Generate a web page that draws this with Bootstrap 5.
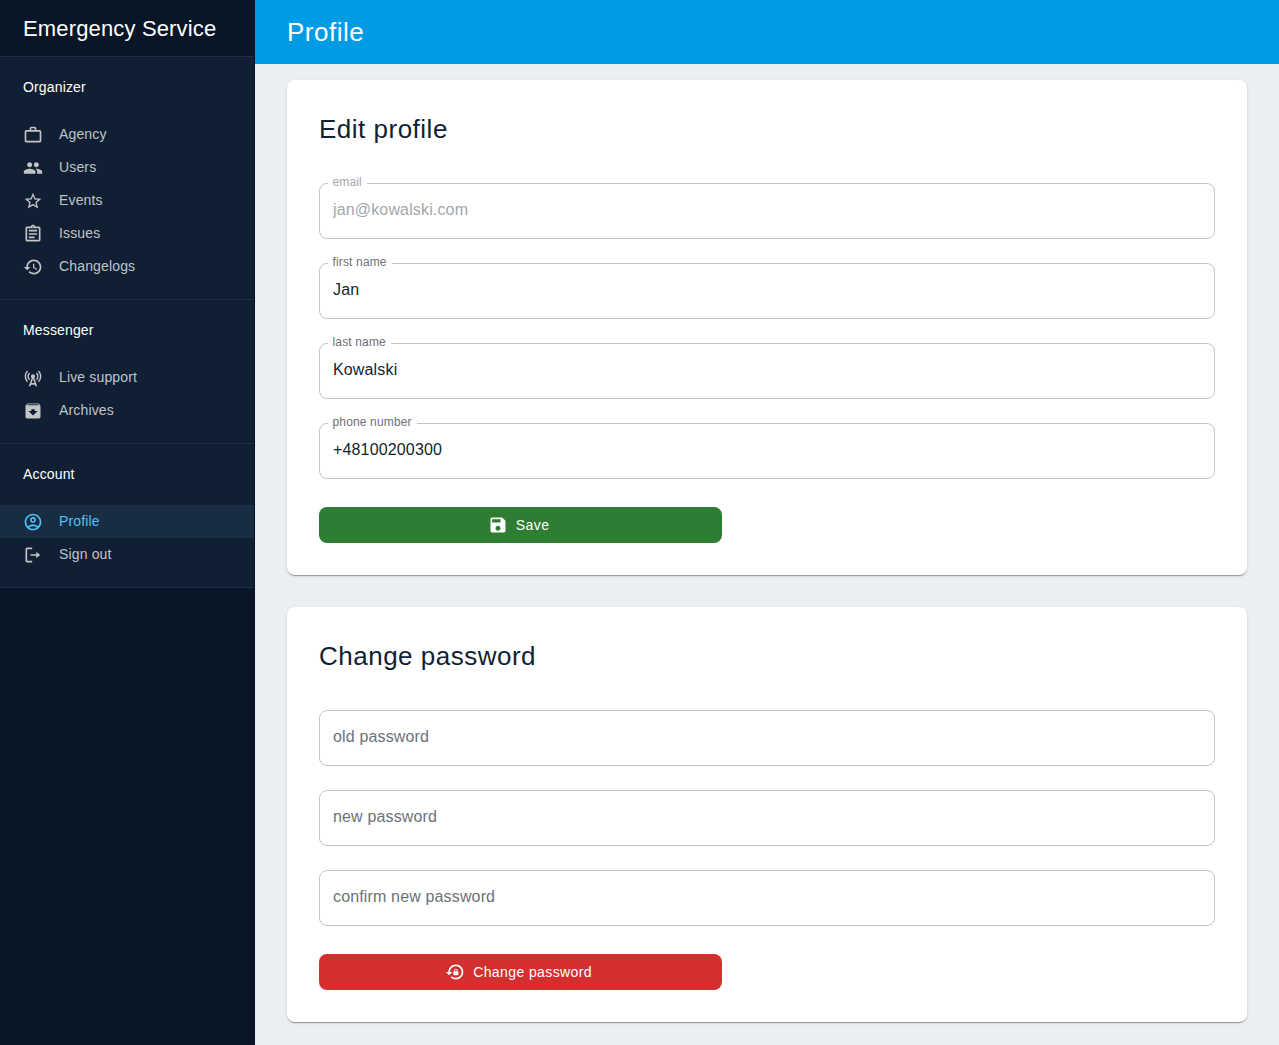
<!DOCTYPE html>
<html lang="en">
<head>
<meta charset="utf-8">
<meta name="viewport" content="width=device-width, initial-scale=1">
<title>Profile</title>
<link href="https://cdn.jsdelivr.net/npm/bootstrap@5.3.0/dist/css/bootstrap.min.css" rel="stylesheet">
<style>
body{font-family:"Liberation Sans",Arial,sans-serif;font-size:14px;letter-spacing:.15px;background:#eaeff1;color:#081627}
.side-bar{width:255px;background:#081627;border-right:1px solid #051020;color:#fff}
.brand{height:57px;padding:0 23px;font-size:22px;line-height:57px;border-bottom:1px solid #1c3144}
.menu-group{background:#101f33;border-bottom:1px solid #1c3144;padding-bottom:16px}
.menu-title{height:61px;line-height:20px;padding:20px 23px 0;font-size:14px;margin:0;font-weight:400}
.menu-group .nav-link{height:33px;padding:0 23px;gap:16px;color:#c2c4c6;line-height:20px}
.menu-group .nav-link.active{color:#4fc3f7;background:#182d42}
.menu-group .nav-link span{margin-top:-1px}
svg{width:20px;height:20px;fill:currentColor;flex:none}
.top-bar{height:64px;background:#009be5;color:#fff}
.page-title{font-size:26px;letter-spacing:.5px;font-weight:400;line-height:32px;margin:0}
.panel{border:0;border-radius:8px;padding:32px;box-shadow:0 2px 1px -1px rgba(0,0,0,.2),0 1px 1px 0 rgba(0,0,0,.14),0 1px 3px 0 rgba(0,0,0,.12)}
.panel .page-title{height:71px;padding-top:1px;color:#101f33}
.panel .form-control{height:56px;padding:12px 13px 14px;border:1px solid #c4c4c4;border-radius:8px;font-size:16px;letter-spacing:.15px;color:#101f33;background:#fff}
.panel .form-control::placeholder{color:#6c7278;opacity:1}
.panel .form-control:disabled{color:#a4a7aa}
.float-label{left:9px;top:-9px;padding:0 5px 0 4.5px;background:#fff;font-size:12px;line-height:16px;color:#6c7278}
.float-label.dim{color:#a4a7aa}
.action{width:45%;height:36px;margin-top:4px;border:0;border-radius:8px;font-size:14px;letter-spacing:.4px;gap:8px;padding:0 4px 0 0}
.action,.action:hover{color:#fff}
.save-btn{background:#2e7d32}
.reset-btn{background:#d32f2f}
</style>
<script src="https://cdn.jsdelivr.net/npm/bootstrap@5.3.0/dist/js/bootstrap.bundle.min.js"></script>
</head>
<body>
<div class="d-flex min-vh-100">
<aside class="side-bar flex-shrink-0">
<div class="brand">Emergency Service</div>
<nav class="menu-group nav flex-column">
<h2 class="menu-title">Organizer</h2>
<a class="nav-link d-flex align-items-center" href="#"><svg viewBox="0 0 24 24"><path d="M14 6V4h-4v2h4zM4 8v11h16V8H4zm16-2c1.11 0 2 .89 2 2v11c0 1.11-.89 2-2 2H4c-1.11 0-2-.89-2-2l.01-11c0-1.11.88-2 1.99-2h4V4c0-1.11.89-2 2-2h4c1.11 0 2 .89 2 2v2h4z"/></svg><span>Agency</span></a>
<a class="nav-link d-flex align-items-center" href="#"><svg viewBox="0 0 24 24"><path d="M16 11c1.66 0 2.99-1.34 2.99-3S17.66 5 16 5c-1.66 0-3 1.34-3 3s1.34 3 3 3zm-8 0c1.66 0 2.99-1.34 2.99-3S9.66 5 8 5C6.34 5 5 6.34 5 8s1.34 3 3 3zm0 2c-2.33 0-7 1.17-7 3.5V19h14v-2.5c0-2.33-4.67-3.5-7-3.5zm8 0c-.29 0-.62.02-.97.05 1.16.84 1.97 1.97 1.97 3.45V19h6v-2.5c0-2.33-4.67-3.5-7-3.5z"/></svg><span>Users</span></a>
<a class="nav-link d-flex align-items-center" href="#"><svg viewBox="0 0 24 24"><path d="M22 9.24l-7.19-.62L12 2 9.19 8.63 2 9.24l5.46 4.73L5.82 21 12 17.27 18.18 21l-1.63-7.03L22 9.24zM12 15.4l-3.76 2.27 1-4.28-3.32-2.88 4.38-.38L12 6.1l1.71 4.04 4.38.38-3.32 2.88 1 4.28L12 15.4z"/></svg><span>Events</span></a>
<a class="nav-link d-flex align-items-center" href="#"><svg viewBox="0 0 24 24"><path d="M7 15h7v2H7zm0-4h10v2H7zm0-4h10v2H7zm12-4h-4.18C14.4 1.84 13.3 1 12 1c-1.3 0-2.4.84-2.82 2H5c-.14 0-.27.01-.4.04-.39.08-.74.28-1.01.55-.18.18-.33.4-.43.64-.1.23-.16.49-.16.77v14c0 .27.06.54.16.78s.25.45.43.64c.27.27.62.47 1.01.55.13.02.26.03.4.03h14c1.1 0 2-.9 2-2V5c0-1.1-.9-2-2-2zm-7-.25c.41 0 .75.34.75.75s-.34.75-.75.75-.75-.34-.75-.75.34-.75.75-.75zM19 19H5V5h14v14z"/></svg><span>Issues</span></a>
<a class="nav-link d-flex align-items-center" href="#"><svg viewBox="0 0 24 24"><path d="M13 3c-4.97 0-9 4.03-9 9H1l3.89 3.89.07.14L9 12H6c0-3.87 3.13-7 7-7s7 3.13 7 7-3.13 7-7 7c-1.93 0-3.68-.79-4.94-2.06l-1.42 1.42C8.27 19.99 10.51 21 13 21c4.97 0 9-4.03 9-9s-4.03-9-9-9zm-1 5v5l4.28 2.54.72-1.21-3.5-2.08V8H12z"/></svg><span>Changelogs</span></a>
</nav>
<nav class="menu-group nav flex-column">
<h2 class="menu-title">Messenger</h2>
<a class="nav-link d-flex align-items-center" href="#"><svg viewBox="0 0 24 24"><path d="m7.3 14.7 1.2-1.2c-1-1-1.5-2.3-1.5-3.5 0-1.3.5-2.6 1.5-3.5L7.3 5.3c-1.3 1.3-2 3-2 4.7s.7 3.4 2 4.7zM19.1 2.9l-1.2 1.2c1.6 1.6 2.4 3.8 2.4 5.9 0 2.1-.8 4.3-2.4 5.9l1.2 1.2c2-2 2.9-4.5 2.9-7.1 0-2.6-1-5.1-2.9-7.1z"/><path d="M6.1 4.1 4.9 2.9C3 4.9 2 7.4 2 10c0 2.6 1 5.1 2.9 7.1l1.2-1.2c-1.6-1.6-2.4-3.8-2.4-5.9 0-2.1.8-4.3 2.4-5.9zm10.6 10.6c1.3-1.3 2-3 2-4.7-.1-1.7-.7-3.4-2-4.7l-1.2 1.2c1 1 1.5 2.3 1.5 3.5 0 1.3-.5 2.6-1.5 3.5l1.2 1.2zM14.5 10c0-1.38-1.12-2.5-2.5-2.5S9.5 8.62 9.5 10c0 .76.34 1.42.87 1.88L7 22h2l.67-2h4.67l.66 2h2l-3.37-10.12c.53-.46.87-1.12.87-1.88zm-4.17 8L12 13l1.67 5h-3.34z"/></svg><span>Live support</span></a>
<a class="nav-link d-flex align-items-center" href="#"><svg viewBox="0 0 24 24"><path d="M20.54 5.23l-1.39-1.68C18.88 3.21 18.47 3 18 3H6c-.47 0-.88.21-1.16.55L3.46 5.23C3.17 5.57 3 6.02 3 6.5V19c0 1.1.9 2 2 2h14c1.1 0 2-.9 2-2V6.5c0-.48-.17-.93-.46-1.27zM12 17.5L6.5 12H10v-2h4v2h3.5L12 17.5zM5.12 5l.81-1h12l.94 1H5.12z"/></svg><span>Archives</span></a>
</nav>
<nav class="menu-group nav flex-column">
<h2 class="menu-title">Account</h2>
<a class="nav-link active d-flex align-items-center" href="#"><svg viewBox="0 0 24 24"><path d="M12 2C6.48 2 2 6.48 2 12s4.48 10 10 10 10-4.48 10-10S17.52 2 12 2zM7.35 18.5C8.66 17.56 10.26 17 12 17s3.34.56 4.65 1.5c-1.31.94-2.91 1.5-4.65 1.5s-3.34-.56-4.65-1.5zm10.79-1.38C16.45 15.8 14.32 15 12 15s-4.45.8-6.14 2.12C4.7 15.73 4 13.95 4 12c0-4.42 3.58-8 8-8s8 3.58 8 8c0 1.95-.7 3.73-1.86 5.12z"/><path d="M12 6c-1.93 0-3.5 1.57-3.5 3.5S10.07 13 12 13s3.5-1.57 3.5-3.5S13.93 6 12 6zm0 5c-.83 0-1.5-.67-1.5-1.5S11.17 8 12 8s1.5.67 1.5 1.5S12.83 11 12 11z"/></svg><span>Profile</span></a>
<a class="nav-link d-flex align-items-center" href="#"><svg viewBox="0 0 24 24"><path d="M5 3h6v2H5v14h6v2H5c-1.1 0-2-.9-2-2V5c0-1.1.9-2 2-2zM16 8l4.5 4-4.5 4v-3H9v-2h7z"/></svg><span>Sign out</span></a>
</nav>
</aside>
<div class="flex-grow-1 d-flex flex-column">
<header class="top-bar d-flex align-items-center px-4"><h1 class="page-title ms-2">Profile</h1></header>
<main class="d-flex flex-column px-4 mx-2 pt-3 gap-4">
<section class="card panel mb-2">
<h2 class="page-title">Edit profile</h2>
<form class="d-flex flex-column gap-4">
<div class="position-relative"><input id="email" class="form-control" value="jan@kowalski.com" disabled><label for="email" class="float-label dim position-absolute">email</label></div>
<div class="position-relative"><input id="first" class="form-control" value="Jan"><label for="first" class="float-label position-absolute">first name</label></div>
<div class="position-relative"><input id="last" class="form-control" value="Kowalski"><label for="last" class="float-label position-absolute">last name</label></div>
<div class="position-relative"><input id="phone" class="form-control" value="+48100200300"><label for="phone" class="float-label position-absolute">phone number</label></div>
<button type="button" class="btn action save-btn d-flex align-items-center justify-content-center"><svg viewBox="0 0 24 24"><path d="M17 3H5c-1.11 0-2 .9-2 2v14c0 1.1.89 2 2 2h14c1.1 0 2-.9 2-2V7l-4-4zm-5 16c-1.66 0-3-1.34-3-3s1.34-3 3-3 3 1.34 3 3-1.34 3-3 3zm3-10H5V5h10v4z"/></svg>Save</button>
</form>
</section>
<section class="card panel">
<h2 class="page-title">Change password</h2>
<form class="d-flex flex-column gap-4">
<input class="form-control" placeholder="old password" aria-label="old password">
<input class="form-control" placeholder="new password" aria-label="new password">
<input class="form-control" placeholder="confirm new password" aria-label="confirm new password">
<button type="button" class="btn action reset-btn d-flex align-items-center justify-content-center"><svg viewBox="0 0 24 24"><path d="M13 3c-4.97 0-9 4.03-9 9H1l4 4 4-4H6c0-3.86 3.14-7 7-7s7 3.14 7 7-3.14 7-7 7c-1.9 0-3.62-.76-4.88-1.99L6.7 18.42C8.32 20.01 10.55 21 13 21c4.97 0 9-4.03 9-9s-4.03-9-9-9zm2 8v-1c0-1.1-.9-2-2-2s-2 .9-2 2v1c-.55 0-1 .45-1 1v3c0 .55.45 1 1 1h4c.55 0 1-.45 1-1v-3c0-.55-.45-1-1-1zm-1 0h-2v-1c0-.55.45-1 1-1s1 .45 1 1v1z"/></svg>Change password</button>
</form>
</section>
</main>
</div>
</div>
</body>
</html>
